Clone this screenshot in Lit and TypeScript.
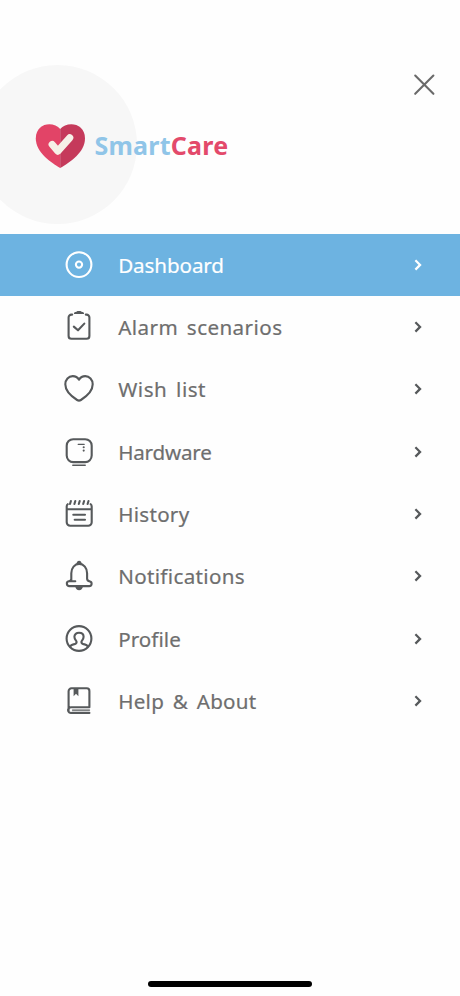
import { LitElement, html, css, svg } from "lit";
import { customElement } from "lit/decorators.js";
import { classMap } from "lit/directives/class-map.js";
import { styleMap } from "lit/directives/style-map.js";

interface MenuItem {
  label: string;
  tracking: number;
  wordGap?: number;
  icon: unknown;
}

const items: MenuItem[] = [
  {
    label: "Dashboard",
    tracking: -0.1,
    icon: svg`<circle cx="16" cy="15.6" r="12.4"/><circle cx="16" cy="15.6" r="3.1"/>`,
  },
  {
    label: "Alarm scenarios",
    tracking: 0.42,
    wordGap: 3,
    icon: svg`<path d="M9.2 3.6H8.4a2.8 2.8 0 0 0-2.8 2.8v18.5a2.8 2.8 0 0 0 2.8 2.8h15.2a2.8 2.8 0 0 0 2.8-2.8V6.4a2.8 2.8 0 0 0-2.8-2.800h-.8M10.800 15.600l4.200 3.700 6.300-6.700"/><path d="M10.900 3.100c0-1.600 1-2.300 2.600-2.300.8-1.300 4.200-1.300 5 0 1.600 0 2.600.7 2.600 2.300z" fill="currentColor" stroke="none"/>`,
  },
  {
    label: "Wish list",
    tracking: 0.5,
    wordGap: 3,
    icon: svg`<path d="M16 6.700C14.600 4.300 12.300 3.100 9.700 3.100 5.600 3.100 2.300 6.600 2.300 11.300c0 7.200 6.900 12.600 11.800 15.700q1.900 1.200 3.800 0c4.900-3.100 11.800-8.500 11.800-15.700 0-4.700-3.300-8.200-7.400-8.200-2.600 0-4.900 1.200-6.300 3.600z"/>`,
  },
  {
    label: "Hardware",
    tracking: -0.2,
    icon: svg`<rect x="3.700" y="3.200" width="25" height="22.900" rx="6.500"/><path d="M9.800 29.300h12.400" stroke-width="1.500"/><path d="M15.200 8.300h6" stroke-width="1.300"/><circle cx="20.700" cy="11.200" r="1.050" fill="currentColor" stroke="none"/><circle cx="20.700" cy="14.600" r="1.050" fill="currentColor" stroke="none"/>`,
  },
  {
    label: "History",
    tracking: 0.27,
    icon: svg`<path d="M4.700 6.200q-1 .8-1 2.300v15.700a3.500 3.500 0 0 0 3.500 3.500h18a3.500 3.500 0 0 0 3.500-3.500V8.500q0-1.500-1-2.300M3.700 11.200h25M10.300 16.700h11.700M11.700 21.700h10.300"/><path d="M7 6l.9-3M11.400 6l.9-3M15.800 6l.9-3M20.200 6l.9-3M24.600 6l.9-3"/>`,
  },
  {
    label: "Notifications",
    tracking: 0.33,
    icon: svg`<path d="M12.300 21.200H6.500M8.300 21V13.200c0-5.300 3.400-9.300 7.900-9.300s7.900 4 7.900 9.300v5.500c0 1.900 1.100 2.400 2.900 2.900 2.400.8 2.100 4.500-.8 4.500H6.400c-3.100 0-3.400-4.300-.7-4.800 1.500-.2 2.600-.8 2.600-2.600"/><path d="M13.200 4.100q.8-3.400 2.900-3.400t2.900 3.400zM12.200 26.500h7.800q-.8 3.700-3.900 3.700t-3.900-3.700z" fill="currentColor" stroke="none"/>`,
  },
  {
    label: "Profile",
    tracking: 0.05,
    icon: svg`<circle cx="16" cy="15.500" r="12.400"/><path d="M7.200 23.600c.5-1.200 1.700-1.900 3.300-2.200 2-.4 3.100-.8 3.100-2.500 0-1.300-2.200-2.200-2.200-5.100C11.400 11.200 13.400 9.800 16 9.800s4.600 1.400 4.600 4c0 2.900-2.200 3.800-2.200 5.100 0 1.700 1.100 2.100 3.100 2.500 1.600.3 2.800 1 3.300 2.200"/>`,
  },
  {
    label: "Help & About",
    tracking: 0.27,
    wordGap: 3,
    icon: svg`<path d="M5.600 25.500V6.200a2.900 2.900 0 0 1 2.900-2.900h15.300a2.600 2.600 0 0 1 2.600 2.600v16.400H8.700a2.900 2.900 0 1 0 0 5.600h17.700"/><path d="M9.500 25.100h17" stroke-width="1.300"/><path d="M10.600 3.300h4.800v8l-2.400-2.500-2.400 2.500z" fill="currentColor" stroke="none"/>`,
  },
];

@customElement("menu-row")
class MenuRow extends LitElement {
  static properties = {
    item: { attribute: false },
    active: { type: Boolean, reflect: true },
  };

  declare item: MenuItem;
  declare active: boolean;

  static styles = css`
    :host {
      display: block;
      height: 62.3px;
    }
    .row {
      box-sizing: border-box;
      height: 100%;
      display: flex;
      align-items: center;
      padding: 0 37px 0 63px;
      color: #56595b;
    }
    .row.active {
      background: #6db3e1;
      color: #fff;
    }
    .icon {
      width: 32px;
      height: 32px;
      flex: none;
      fill: none;
      stroke: currentColor;
      stroke-width: 2.100;
      stroke-linecap: round;
      stroke-linejoin: round;
    }
    .label {
      flex: 1;
      margin-left: 23.200px;
      font: 400 20.600px/30px "Noto Sans", "Open Sans", sans-serif;
      -webkit-text-stroke: 0.200px currentColor;
      color: #6e6e6e;
      white-space: nowrap;
    }
    .active .label {
      color: #fff;
    }
    .chevron {
      width: 10px;
      height: 14px;
      flex: none;
      fill: none;
      stroke: currentColor;
      stroke-width: 2.200;
    }
  `;

  render() {
    const { label, tracking, wordGap = 0, icon } = this.item;
    return html`
      <div class=${classMap({ row: true, active: this.active })}>
        <svg class="icon" viewBox="0 0 32 32">${icon}</svg>
        <span
          class="label"
          style=${styleMap({ letterSpacing: `${tracking}px`, wordSpacing: `${wordGap}px` })}
          >${label}</span
        >
        <svg class="chevron" viewBox="0 0 10 14"><path d="M2.400 2.200L7.100 6.900 2.400 11.600" /></svg>
      </div>
    `;
  }
}

@customElement("app-root")
class AppRoot extends LitElement {
  static styles = css`
    :host {
      display: block;
    }
    .screen {
      box-sizing: border-box;
      width: 460px;
      height: 996px;
      display: flex;
      flex-direction: column;
      background: #fefefe;
      overflow: hidden;
    }
    .header {
      position: relative;
      box-sizing: border-box;
      height: 233.700px;
      flex: none;
      display: flex;
      justify-content: space-between;
      align-items: flex-start;
      padding: 72px 22px 0 35px;
    }
    .halo {
      position: absolute;
      left: -22.500px;
      top: 64.500px;
      width: 159.500px;
      height: 159.500px;
      border-radius: 50%;
      background: #f7f7f7;
    }
    .brand {
      position: relative;
      display: flex;
      align-items: center;
      margin-top: 51px;
    }
    .logo {
      width: 51px;
      height: 46px;
    }
    .name {
      margin: -2px 0 0 8.500px;
      font: 700 25px/34px "Noto Sans", "Open Sans", sans-serif;
      letter-spacing: 0.230px;
      color: #90c5e8;
    }
    .care {
      color: #e34a6b;
    }
    .close {
      width: 26px;
      height: 26px;
      fill: none;
      stroke: #6a6a6a;
      stroke-width: 2.100;
      stroke-linecap: round;
    }
    .menu {
      flex: 1;
    }
    .home {
      width: 164.500px;
      height: 6px;
      border-radius: 3px;
      background: #000;
      align-self: center;
      margin-bottom: 9px;
      flex: none;
    }
  `;

  render() {
    return html`
      <main class="screen">
        <header class="header">
          <div class="halo"></div>
          <div class="brand">
            <svg class="logo" viewBox="0 0 51 46">
              <path
                fill="#e24467"
                d="M25.200 6C19-2 .8-1 .8 15.500.8 29.500 16 39.500 25.200 45z"
              />
              <path
                fill="#c53a5b"
                d="M25.200 6C31.500-2 50-1 50 15.500 50 29.500 34.500 39.500 25.200 45z"
              />
              <path
                d="M17.200 21.500l5.700 6.600L34.700 14.800"
                fill="none"
                stroke="#f6f1e8"
                stroke-width="7.200"
                stroke-linecap="round"
                stroke-linejoin="round"
              />
            </svg>
            <span class="name">Smart<span class="care">Care</span></span>
          </div>
          <svg class="close" viewBox="0 0 26 26"><path d="M3.200 3.600L21.400 21.800M21.400 3.600L3.200 21.800" /></svg>
        </header>
        <nav class="menu">
          ${items.map((item, i) => html`<menu-row .item=${item} ?active=${i === 0}></menu-row>`)}
        </nav>
        <div class="home"></div>
      </main>
    `;
  }
}
